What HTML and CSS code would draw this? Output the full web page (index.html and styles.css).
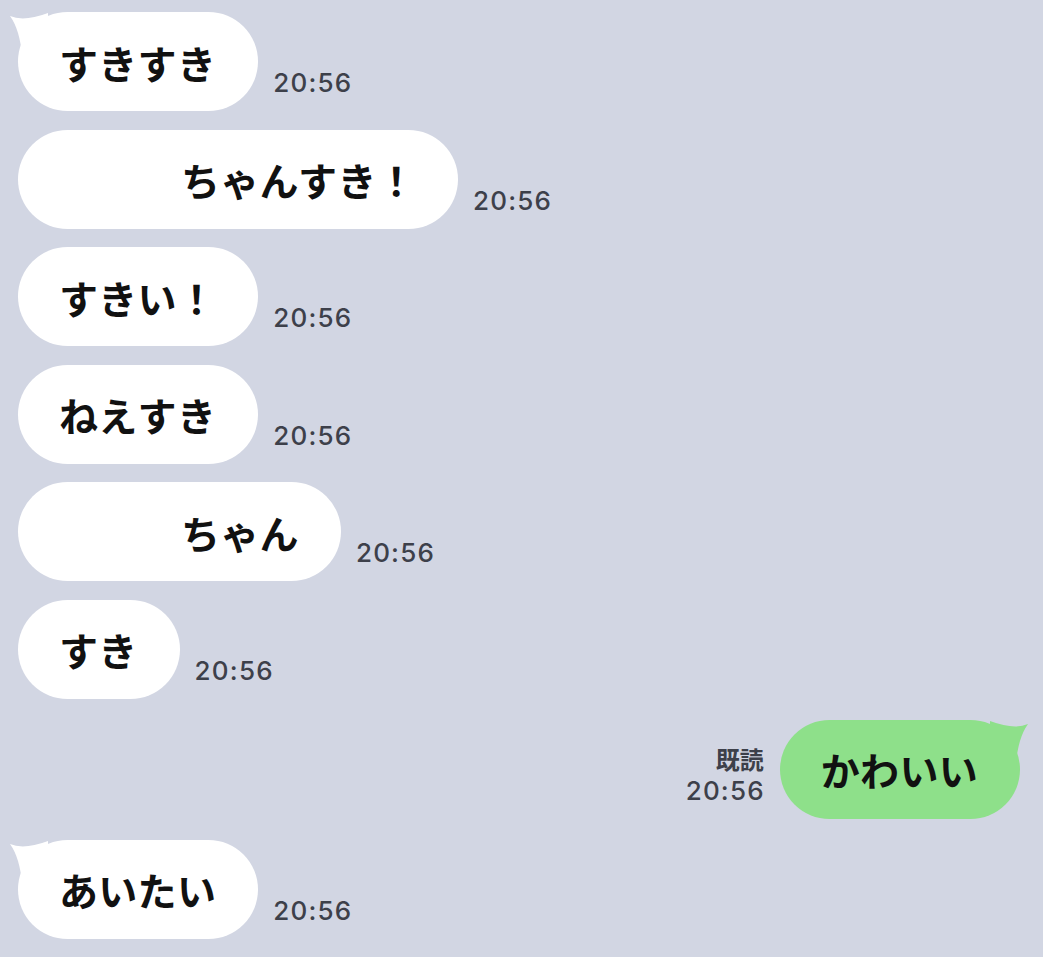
FILE: index.html
```html
<!DOCTYPE html>
<html lang="ja">
<head>
    <meta charset="UTF-8">
    <meta name="viewport" content="width=device-width, initial-scale=1.0">
    <title>トーク</title>
    <link rel="stylesheet" href="styles.css">
</head>
<body>

    <div class="chat">
        <div class="row">
            <div class="bubble has-tail">
                <svg class="tail" viewBox="0 0 50 50" width="50" height="50"><path d="M2 4 Q 16 10 40 1 L 40 44 L 14 44 Q 12 18 2 4 Z"/></svg>
                <span>すきすき</span>
            </div>
            <span class="time">20:56</span>
        </div>

        <div class="row">
            <div class="bubble"><span class="blank"></span><span>ちゃんすき！</span></div>
            <span class="time">20:56</span>
        </div>

        <div class="row">
            <div class="bubble"><span>すきい！</span></div>
            <span class="time">20:56</span>
        </div>

        <div class="row">
            <div class="bubble"><span>ねえすき</span></div>
            <span class="time">20:56</span>
        </div>

        <div class="row">
            <div class="bubble"><span class="blank"></span><span>ちゃん</span></div>
            <span class="time">20:56</span>
        </div>

        <div class="row">
            <div class="bubble"><span>すき</span></div>
            <span class="time">20:56</span>
        </div>

        <div class="row sent">
            <div class="meta">
                <span class="read">既読</span>
                <span class="time">20:56</span>
            </div>
            <div class="bubble green has-tail">
                <svg class="tail" viewBox="0 0 50 50" width="50" height="50"><path d="M48 4 Q 34 10 10 1 L 10 44 L 36 44 Q 38 18 48 4 Z"/></svg>
                <span>かわいい</span>
            </div>
        </div>

        <div class="row">
            <div class="bubble has-tail">
                <svg class="tail" viewBox="0 0 50 50" width="50" height="50"><path d="M2 4 Q 16 10 40 1 L 40 44 L 14 44 Q 12 18 2 4 Z"/></svg>
                <span>あいたい</span>
            </div>
            <span class="time">20:56</span>
        </div>
    </div>

</body>
</html>
```

FILE: styles.css
```css
body {
    margin: 0;
    background-color: #d2d6e3;
    font-family: "Noto Sans CJK JP", "Noto Sans", sans-serif;
    color: #111;
}
.chat {
    display: flex;
    flex-direction: column;
    gap: 18.6px;
    padding: 12px 23px 0 18px;
}
.row {
    display: flex;
    align-items: flex-end;
    gap: 15px;
}
.row.sent {
    justify-content: flex-end;
    gap: 16px;
    margin-top: 2.4px;
    margin-bottom: 2.4px;
}
.bubble {
    position: relative;
    display: flex;
    align-items: center;
    height: 99px;
    padding: 0 42px 0 41px;
    background-color: #fff;
    border-radius: 50px;
    font-size: 39px;
    font-weight: 700;
    letter-spacing: 0.3px;
    box-sizing: border-box;
}
.bubble span {
    position: relative;
}
.bubble.green {
    background-color: #8ee08a;
}
.blank {
    display: inline-block;
    width: 122px;
}
.tail {
    position: absolute;
    top: 0;
    left: -10px;
    fill: #fff;
}
.green .tail {
    left: auto;
    right: -10px;
    fill: #8ee08a;
}
.time {
    font-family: Inter, "Liberation Sans", Arial, sans-serif;
    font-size: 26px;
    font-weight: 500;
    line-height: 1;
    letter-spacing: 1.2px;
    color: #3d404a;
    margin-bottom: 15px;
}
.meta {
    display: flex;
    flex-direction: column;
    align-items: flex-end;
    gap: 7px;
    margin-bottom: 15px;
}
.meta .time {
    margin-bottom: 0;
    margin-right: -1px;
}
.read {
    font-size: 24px;
    line-height: 1;
    font-weight: 700;
    color: #3d404a;
}
```
